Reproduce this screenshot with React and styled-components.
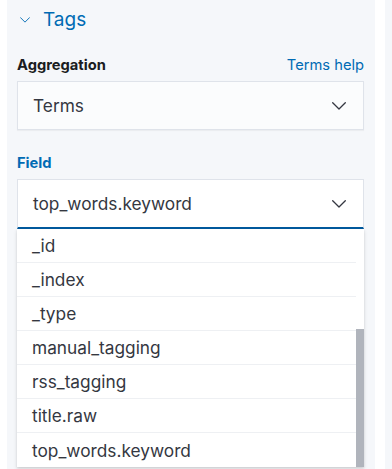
import React from "react";
import styled, { createGlobalStyle } from "styled-components";

const GlobalStyle = createGlobalStyle`
  body {
    margin: 0;
    background: #ffffff;
    font-family: Inter, "Noto Sans", sans-serif;
    -webkit-font-smoothing: antialiased;
  }
`;

const fields = [
  "_id",
  "_index",
  "_type",
  "manual_tagging",
  "rss_tagging",
  "title.raw",
  "top_words.keyword",
];

const Chevron = ({ width = 14, height = 8, color = "#343741" }) => (
  <svg width={width} height={height} viewBox="0 0 14 8" fill="none">
    <path
      d="M0.7 0.7 L7 7 L13.3 0.7"
      stroke={color}
      strokeWidth="1.3"
      strokeLinecap="round"
      strokeLinejoin="round"
    />
  </svg>
);

export default function App() {
  return (
    <>
      <GlobalStyle />
      <Page>
        <Gutter />
        <Panel>
          <SectionHeader>
            <Chevron width={10} height={6} color="#006bb4" />
            <SectionTitle>Tags</SectionTitle>
          </SectionHeader>

          <LabelRow>
            <Label>Aggregation</Label>
            <HelpLink>Terms help</HelpLink>
          </LabelRow>
          <Select>
            <SelectValue>Terms</SelectValue>
            <Chevron />
          </Select>

          <LabelRow $top={24}>
            <Label $active>Field</Label>
          </LabelRow>
          <Combo>
            <Select $open>
              <SelectValue>top_words.keyword</SelectValue>
              <Chevron />
            </Select>
            <ListBox>
              <Options>
                {fields.map((f) => (
                  <Option key={f}>{f}</Option>
                ))}
              </Options>
              <ScrollTrack>
                <ScrollThumb />
              </ScrollTrack>
            </ListBox>
          </Combo>
        </Panel>
        <Spacer />
        <SidePanel />
      </Page>
    </>
  );
}

const Page = styled.div`
  display: flex;
  height: 469px;
  overflow: hidden;
`;

const Gutter = styled.div`
  width: 7px;
  flex: none;
`;

const Panel = styled.div`
  width: 368px;
  flex: none;
  box-sizing: border-box;
  background: #f5f7fa;
  padding: 8px 11px 0 10px;
  display: flex;
  flex-direction: column;
`;

const Spacer = styled.div`
  width: 10px;
  flex: none;
`;

const SidePanel = styled.div`
  flex: 1;
  background: #f5f7fa;
`;

const SectionHeader = styled.div`
  display: flex;
  align-items: center;
  gap: 13px;
  padding-left: 3px;
  height: 24px;
`;

const SectionTitle = styled.span`
  font-size: 19px;
  color: #006bb4;
  line-height: 24px;
`;

const LabelRow = styled.div`
  display: flex;
  justify-content: space-between;
  align-items: baseline;
  margin-top: ${(p) => p.$top ?? 24}px;
  height: 20px;
  margin-bottom: 5px;
`;

const Label = styled.span`
  font-size: 14.7px;
  font-weight: 700;
  color: ${(p) => (p.$active ? "#006bb4" : "#1a1c21")};
`;

const HelpLink = styled.a`
  font-size: 14.7px;
  color: #006bb4;
  cursor: pointer;
`;

const Select = styled.div`
  height: ${(p) => (p.$open ? 50 : 49)}px;
  box-sizing: border-box;
  display: flex;
  align-items: center;
  justify-content: space-between;
  padding: 0 17px 0 15px;
  background: ${(p) => (p.$open ? "#ffffff" : "#fbfcfd")};
  border: 1px solid #dfe3ea;
  border-bottom: ${(p) => (p.$open ? "2px solid #005a9e" : "1px solid #dfe3ea")};
  box-shadow: ${(p) => (p.$open ? "none" : "0 1px 1px rgba(0,0,0,0.04)")};
`;

const SelectValue = styled.span`
  font-size: 17.3px;
  color: #343741;
`;

const Combo = styled.div`
  display: flex;
  flex-direction: column;
`;

const ListBox = styled.div`
  display: flex;
  background: #ffffff;
  box-shadow: 0 2px 4px rgba(0, 0, 0, 0.12), 0 1px 2px rgba(0, 0, 0, 0.08);
`;

const Options = styled.div`
  flex: 1;
  display: flex;
  flex-direction: column;
`;

const Option = styled.div`
  height: 34px;
  box-sizing: border-box;
  display: flex;
  align-items: center;
  padding-left: 15px;
  font-size: 17.3px;
  color: #343741;
  border-bottom: 1px solid #eef0f3;
  &:last-child {
    border-bottom: none;
  }
`;

const ScrollTrack = styled.div`
  width: 8px;
  display: flex;
  flex-direction: column;
  justify-content: flex-end;
`;

const ScrollThumb = styled.div`
  height: 138px;
  background: #b0b4bc;
`;
